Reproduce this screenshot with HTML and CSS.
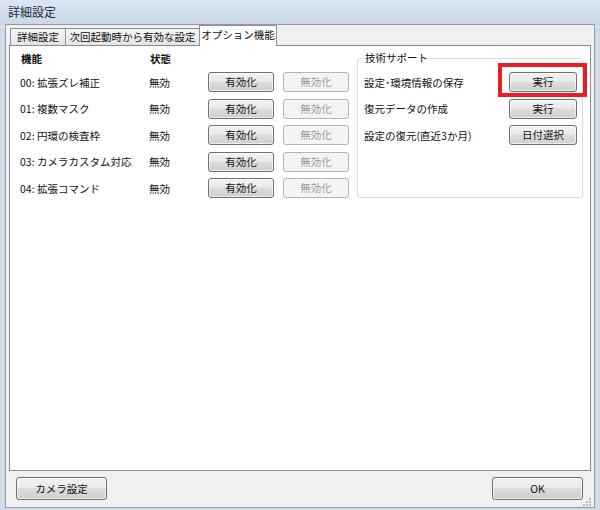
FILE: index.html
```html
<!DOCTYPE html>
<html lang="ja">
<head>
<meta charset="utf-8">
<title>詳細設定</title>
<link rel="stylesheet" href="styles.css">
</head>
<body>
<div class="titlebar">詳細設定</div>
<div class="client">
  <div class="tabstrip">
    <div class="tab t1">詳細設定</div>
    <div class="tab t2">次回起動時から有効な設定</div>
    <div class="tab active">オプション機能</div>
  </div>
  <div class="panel">
    <div class="options">
      <div class="hd">機能</div>
      <div class="hd">状態</div>
      <div></div>
      <div></div>

      <div class="lbl">00: 拡張ズレ補正</div>
      <div class="lbl">無効</div>
      <div class="cell"><button class="btn">有効化</button></div>
      <div class="cell"><button class="btn" disabled>無効化</button></div>

      <div class="lbl">01: 複数マスク</div>
      <div class="lbl">無効</div>
      <div class="cell"><button class="btn">有効化</button></div>
      <div class="cell"><button class="btn" disabled>無効化</button></div>

      <div class="lbl">02: 円環の検査枠</div>
      <div class="lbl">無効</div>
      <div class="cell"><button class="btn">有効化</button></div>
      <div class="cell"><button class="btn" disabled>無効化</button></div>

      <div class="lbl">03: カメラカスタム対応</div>
      <div class="lbl">無効</div>
      <div class="cell"><button class="btn">有効化</button></div>
      <div class="cell"><button class="btn" disabled>無効化</button></div>

      <div class="lbl">04: 拡張コマンド</div>
      <div class="lbl">無効</div>
      <div class="cell"><button class="btn">有効化</button></div>
      <div class="cell"><button class="btn" disabled>無効化</button></div>
    </div>
    <fieldset class="support">
      <legend>技術サポート</legend>
      <div class="srow">
        <span class="lbl">設定･環境情報の保存</span>
        <span class="hl-wrap"><button class="btn sbtn">実行</button><span class="highlight"></span></span>
      </div>
      <div class="srow">
        <span class="lbl">復元データの作成</span>
        <button class="btn sbtn">実行</button>
      </div>
      <div class="srow">
        <span class="lbl">設定の復元(直近3か月)</span>
        <button class="btn sbtn">日付選択</button>
      </div>
    </fieldset>
  </div>
  <div class="bottombar">
    <button class="btn wide">カメラ設定</button>
    <button class="btn wide">OK</button>
    <svg class="grip" width="8" height="8" viewBox="0 0 8 8">
      <g fill="#b9c0c8">
        <rect x="6" y="0" width="2" height="2"/>
        <rect x="3" y="3" width="2" height="2"/><rect x="6" y="3" width="2" height="2"/>
        <rect x="0" y="6" width="2" height="2"/><rect x="3" y="6" width="2" height="2"/><rect x="6" y="6" width="2" height="2"/>
      </g>
    </svg>
  </div>
</div>
</body>
</html>
```
FILE: styles.css
```css
html, body {
  margin: 0;
  padding: 0;
}
body {
  width: 600px;
  height: 510px;
  overflow: hidden;
  background: #cfdbe8;
  font-family: "Noto Sans CJK JP", "Noto Sans", sans-serif;
  font-size: 10.5px;
  color: #111;
  display: flex;
  flex-direction: column;
}
.titlebar {
  height: 24px;
  line-height: 24px;
  padding-left: 8px;
  font-size: 12px;
  color: #1e2a3a;
  background: linear-gradient(#dbe6f2, #cbd8e6);
  flex: none;
}
.client {
  flex: none;
  height: 482px;
  margin: 0 5px 0 5px;
  border: 1px solid #8e9aa6;
  background: #f0f0f0;
  display: flex;
  flex-direction: column;
  padding: 0 3px;
}
.tabstrip {
  height: 20px;
  display: flex;
  align-items: flex-end;
  padding-left: 1px;
  flex: none;
}
.tab {
  height: 16px;
  line-height: 16px;
  border: 1px solid #8c8f96;
  border-bottom: none;
  background: linear-gradient(#f6f6f6, #e4e4e4);
  text-align: center;
  color: #111;
  box-sizing: content-box;
}
.t1 { width: 54px; }
.t2 { width: 133px; border-left: none; }
.tab.active {
  width: 76px;
  height: 20px;
  line-height: 18px;
  background: #fff;
  margin-bottom: -1px;
  margin-left: -1px;
  position: relative;
  z-index: 1;
}
.panel {
  flex: none;
  height: 424px;
  border: 1px solid #898c95;
  background: #fff;
  display: flex;
  align-items: flex-start;
  padding-left: 10px;
}
.options {
  display: grid;
  grid-template-columns: 120px 50px 66px 66px;
  column-gap: 9px;
  grid-template-rows: 20px repeat(5, 26.5px);
  padding-top: 3px;
  flex: none;
}
.hd {
  font-weight: bold;
  line-height: 20px;
  padding-left: 1px;
}
.lbl {
  display: flex;
  align-items: center;
  white-space: nowrap;
}
.cell {
  display: flex;
  align-items: center;
}
.btn {
  font-family: inherit;
  font-size: 10.5px;
  color: #111;
  height: 20px;
  padding: 0;
  border: 1px solid #707070;
  border-radius: 3px;
  background: linear-gradient(#f2f2f2 0%, #ebebeb 45%, #dddddd 50%, #cfcfcf 100%);
  box-shadow: inset 0 0 0 1px rgba(255,255,255,0.6);
  width: 66px;
  line-height: 18px;
}
.btn:disabled {
  border-color: #b3b6b9;
  background: #f4f4f4;
  color: #9a9a9a;
  box-shadow: none;
}
.support {
  margin: 6px 0 0 8px;
  width: 226px;
  box-sizing: border-box;
  border: 1px solid #d5dde3;
  border-radius: 3px;
  padding: 5px 5px 48px 6px;
  min-width: 0;
  flex: none;
}
.support legend {
  padding: 0 1px;
  line-height: 12px;
  color: #111;
}
.srow {
  height: 26.5px;
  display: flex;
  align-items: center;
  justify-content: space-between;
}
.sbtn {
  width: 68px;
}
.hl-wrap {
  position: relative;
  display: inline-flex;
}
.highlight {
  position: absolute;
  left: -11px;
  right: -10px;
  top: -9px;
  bottom: -5px;
  border: 4px solid #ec1c24;
}
.bottombar {
  flex: 1;
  display: flex;
  justify-content: space-between;
  align-items: flex-start;
  padding: 6px 8px 0 7px;
  position: relative;
}
.wide {
  width: 91px;
  height: 23px;
  line-height: 21px;
}
.grip {
  position: absolute;
  right: 0;
  bottom: 1px;
}
```
